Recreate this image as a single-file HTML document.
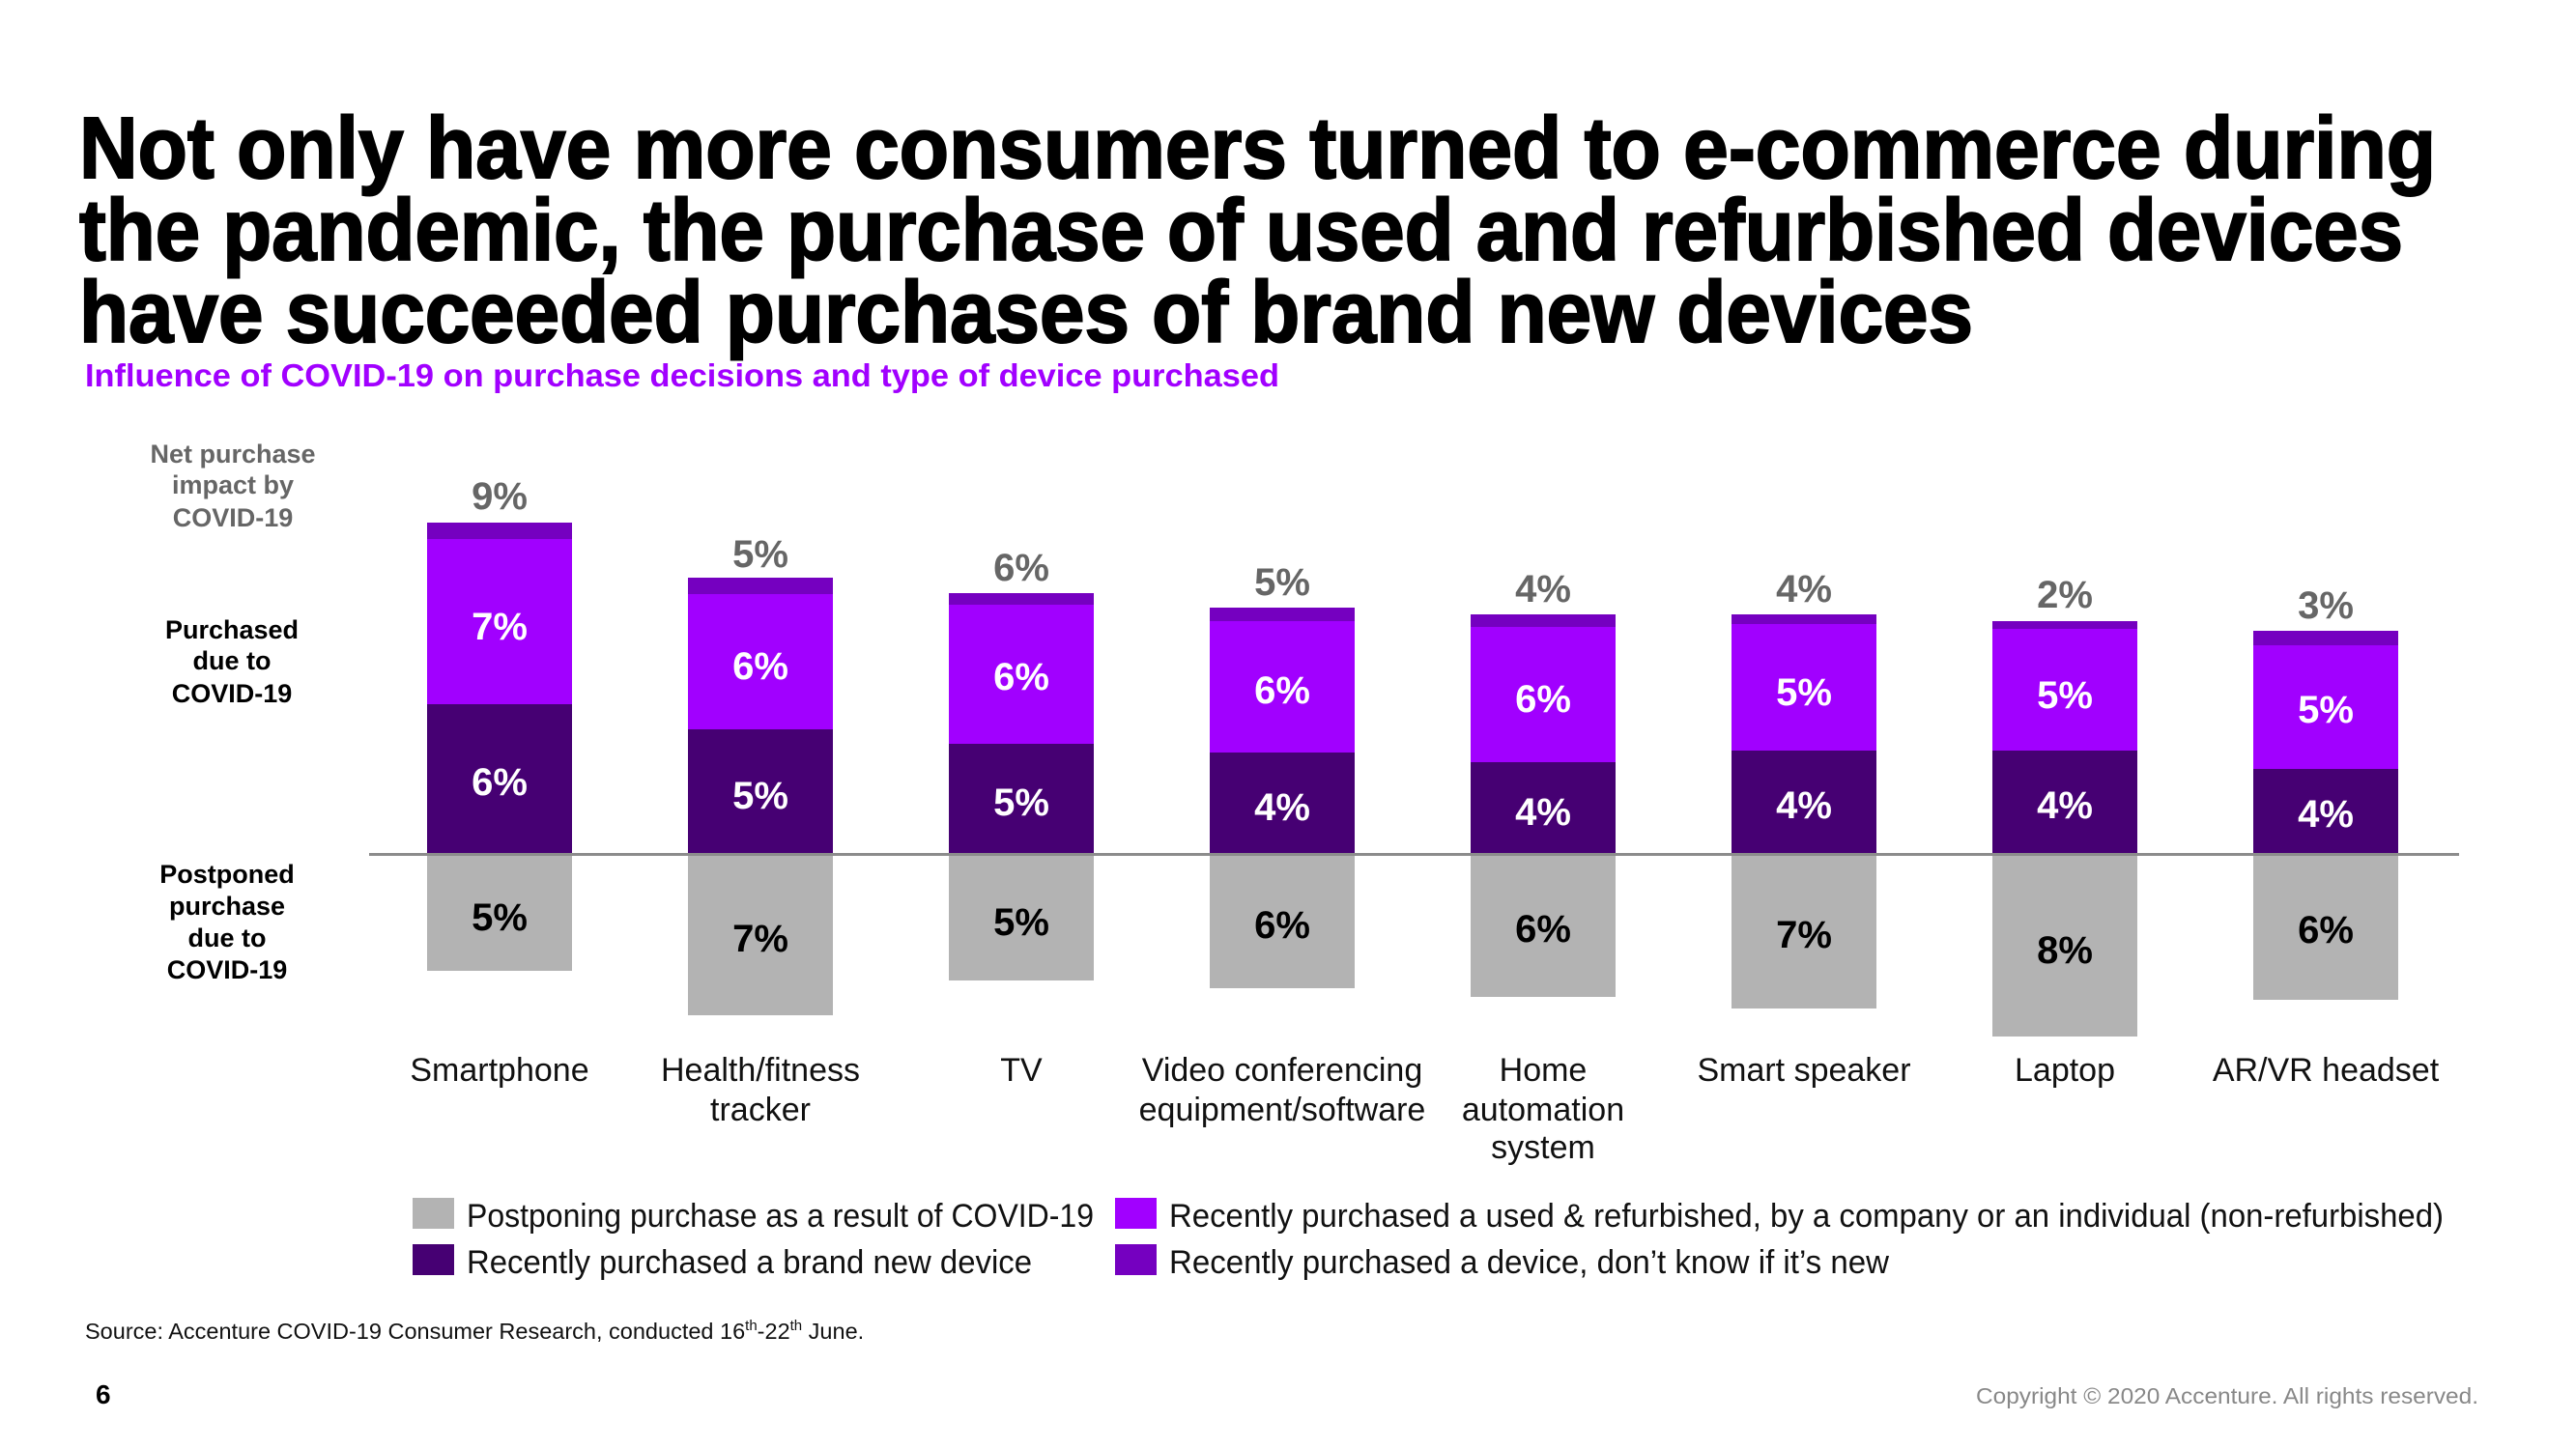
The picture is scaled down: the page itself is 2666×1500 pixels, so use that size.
<!DOCTYPE html>
<html><head><meta charset="utf-8"><style>
html,body{margin:0;padding:0;background:#fff;width:2666px;height:1500px;overflow:hidden}
svg{display:block}
text{font-family:"Liberation Sans",Arial,sans-serif}
</style></head><body>
<svg width="2666" height="1500" viewBox="0 0 2666 1500" xmlns="http://www.w3.org/2000/svg">
<g font-weight="bold" font-size="90" fill="#000" stroke="#000" stroke-width="2">
<text x="82" y="184" textLength="2439" lengthAdjust="spacingAndGlyphs">Not only have more consumers turned to e-commerce during</text>
<text x="82" y="269" textLength="2405" lengthAdjust="spacingAndGlyphs">the pandemic, the purchase of used and refurbished devices</text>
<text x="82" y="354" textLength="1960" lengthAdjust="spacingAndGlyphs">have succeeded purchases of brand new devices</text>
</g>
<text x="88" y="400" font-size="33" font-weight="bold" fill="#A100FF" textLength="1236" lengthAdjust="spacingAndGlyphs">Influence of COVID-19 on purchase decisions and type of device purchased</text>

<g font-size="27" font-weight="bold" text-anchor="middle">
<g fill="#666"><text x="241" y="479">Net purchase</text><text x="241" y="511">impact by</text><text x="241" y="545">COVID-19</text></g>
<g fill="#000"><text x="240" y="661">Purchased</text><text x="240" y="693">due to</text><text x="240" y="727">COVID-19</text>
<text x="235" y="914">Postponed</text><text x="235" y="947">purchase</text><text x="235" y="980">due to</text><text x="235" y="1013">COVID-19</text></g>
</g>

<g>
<rect x="442" y="541" width="150" height="17" fill="#7500C0"/><rect x="442" y="558" width="150" height="171" fill="#A100FF"/><rect x="442" y="729" width="150" height="155" fill="#460073"/><rect x="442" y="884" width="150" height="121" fill="#B3B3B3"/>
<rect x="712" y="598" width="150" height="17" fill="#7500C0"/><rect x="712" y="615" width="150" height="140" fill="#A100FF"/><rect x="712" y="755" width="150" height="129" fill="#460073"/><rect x="712" y="884" width="150" height="167" fill="#B3B3B3"/>
<rect x="982" y="614" width="150" height="12" fill="#7500C0"/><rect x="982" y="626" width="150" height="144" fill="#A100FF"/><rect x="982" y="770" width="150" height="114" fill="#460073"/><rect x="982" y="884" width="150" height="131" fill="#B3B3B3"/>
<rect x="1252" y="629" width="150" height="14" fill="#7500C0"/><rect x="1252" y="643" width="150" height="136" fill="#A100FF"/><rect x="1252" y="779" width="150" height="105" fill="#460073"/><rect x="1252" y="884" width="150" height="139" fill="#B3B3B3"/>
<rect x="1522" y="636" width="150" height="13" fill="#7500C0"/><rect x="1522" y="649" width="150" height="140" fill="#A100FF"/><rect x="1522" y="789" width="150" height="95" fill="#460073"/><rect x="1522" y="884" width="150" height="148" fill="#B3B3B3"/>
<rect x="1792" y="636" width="150" height="10" fill="#7500C0"/><rect x="1792" y="646" width="150" height="131" fill="#A100FF"/><rect x="1792" y="777" width="150" height="107" fill="#460073"/><rect x="1792" y="884" width="150" height="160" fill="#B3B3B3"/>
<rect x="2062" y="643" width="150" height="8" fill="#7500C0"/><rect x="2062" y="651" width="150" height="126" fill="#A100FF"/><rect x="2062" y="777" width="150" height="107" fill="#460073"/><rect x="2062" y="884" width="150" height="189" fill="#B3B3B3"/>
<rect x="2332" y="653" width="150" height="15" fill="#7500C0"/><rect x="2332" y="668" width="150" height="128" fill="#A100FF"/><rect x="2332" y="796" width="150" height="88" fill="#460073"/><rect x="2332" y="884" width="150" height="151" fill="#B3B3B3"/>
</g>
<rect x="382" y="883" width="2163" height="3" fill="#8c8c8c"/>

<g font-size="40" font-weight="bold" text-anchor="middle">
<g fill="#666">
<text x="517" y="527">9%</text><text x="787" y="587">5%</text><text x="1057" y="601">6%</text><text x="1327" y="616">5%</text><text x="1597" y="623">4%</text><text x="1867" y="623">4%</text><text x="2137" y="629">2%</text><text x="2407" y="640">3%</text>
</g>
<g fill="#fff">
<text x="517" y="662">7%</text><text x="787" y="703">6%</text><text x="1057" y="714">6%</text><text x="1327" y="728">6%</text><text x="1597" y="737">6%</text><text x="1867" y="730">5%</text><text x="2137" y="733">5%</text><text x="2407" y="748">5%</text>
<text x="517" y="823">6%</text><text x="787" y="837">5%</text><text x="1057" y="844">5%</text><text x="1327" y="849">4%</text><text x="1597" y="854">4%</text><text x="1867" y="847">4%</text><text x="2137" y="847">4%</text><text x="2407" y="856">4%</text>
</g>
<g fill="#000">
<text x="517" y="963">5%</text><text x="787" y="985">7%</text><text x="1057" y="968">5%</text><text x="1327" y="971">6%</text><text x="1597" y="975">6%</text><text x="1867" y="981">7%</text><text x="2137" y="997">8%</text><text x="2407" y="976">6%</text>
</g>
</g>

<g font-size="34" fill="#111" text-anchor="middle">
<text x="517" y="1119">Smartphone</text>
<text x="787" y="1119">Health/fitness</text><text x="787" y="1160">tracker</text>
<text x="1057" y="1119">TV</text>
<text x="1327" y="1119">Video conferencing</text><text x="1327" y="1160">equipment/software</text>
<text x="1597" y="1119">Home</text><text x="1597" y="1160">automation</text><text x="1597" y="1199">system</text>
<text x="1867" y="1119">Smart speaker</text>
<text x="2137" y="1119">Laptop</text>
<text x="2407" y="1119">AR/VR headset</text>
</g>

<rect x="427" y="1240" width="43" height="32" fill="#B3B3B3"/>
<rect x="427" y="1288" width="43" height="32" fill="#460073"/>
<rect x="1154" y="1240" width="43" height="32" fill="#A100FF"/>
<rect x="1154" y="1288" width="43" height="32" fill="#7500C0"/>
<g font-size="34" fill="#111">
<text x="483" y="1270" textLength="649" lengthAdjust="spacingAndGlyphs">Postponing purchase as a result of COVID-19</text>
<text x="483" y="1318" textLength="585" lengthAdjust="spacingAndGlyphs">Recently purchased a brand new device</text>
<text x="1210" y="1270" textLength="1319" lengthAdjust="spacingAndGlyphs">Recently purchased a used &amp; refurbished, by a company or an individual (non-refurbished)</text>
<text x="1210" y="1318" textLength="745" lengthAdjust="spacingAndGlyphs">Recently purchased a device, don’t know if it’s new</text>
</g>

<text x="88" y="1386" font-size="23.5" fill="#111">Source: Accenture COVID-19 Consumer Research, conducted 16<tspan font-size="15" dy="-9">th</tspan><tspan dy="9">-22</tspan><tspan font-size="15" dy="-9">th</tspan><tspan dy="9"> June.</tspan></text>
<text x="99" y="1453" font-size="28" font-weight="bold" fill="#000">6</text>
<text x="2045" y="1453" font-size="23" fill="#888" textLength="520" lengthAdjust="spacingAndGlyphs">Copyright © 2020 Accenture. All rights reserved.</text>
</svg>
</body></html>
